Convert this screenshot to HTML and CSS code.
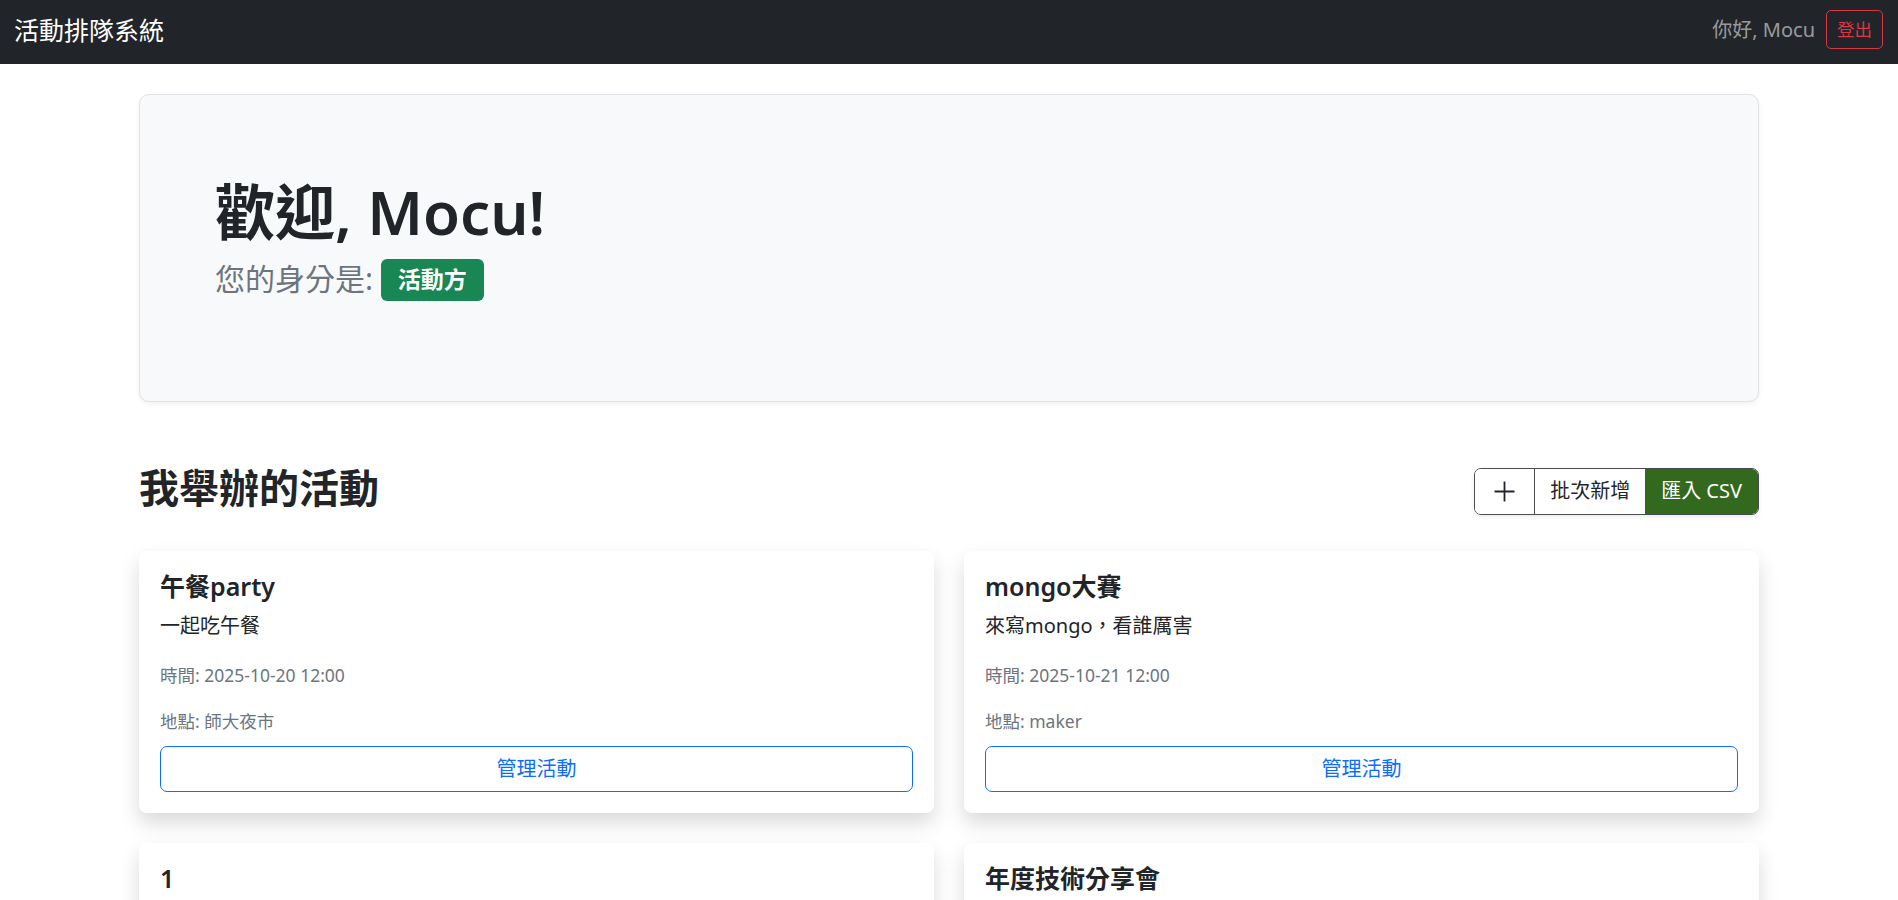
FILE: index.html
```html
<!DOCTYPE html>
<html lang="zh-Hant">
<head>
<meta charset="utf-8">
<title>活動排隊系統</title>
<link rel="stylesheet" href="styles.css">
</head>
<body>
<nav class="navbar">
  <a class="brand" href="#">活動排隊系統</a>
  <div class="nav-right">
    <span class="greet">你好, Mocu</span>
    <button class="btn-logout" type="button">登出</button>
  </div>
</nav>
<main class="container">
  <section class="hero">
    <h1 class="hero-title">歡迎, Mocu!</h1>
    <p class="hero-lead">您的身分是: <span class="badge">活動方</span></p>
  </section>

  <div class="section-head">
    <h2 class="section-title">我舉辦的活動</h2>
    <div class="btn-group">
      <button class="grp-btn grp-add" type="button" aria-label="新增">
        <svg width="23" height="23" viewBox="0 0 23 23" aria-hidden="true"><path d="M11.5 1.5v20M1.5 11.5h20" stroke="#212529" stroke-width="1.8" fill="none"/></svg>
      </button>
      <button class="grp-btn" type="button">批次新增</button>
      <button class="grp-btn grp-csv" type="button">匯入 CSV</button>
    </div>
  </div>

  <div class="card-grid">
    <article class="card">
      <h5 class="card-title">午餐party</h5>
      <p class="card-desc">一起吃午餐</p>
      <p class="card-meta">時間: 2025-10-20 12:00</p>
      <p class="card-meta card-loc">地點: 師大夜市</p>
      <button class="btn-manage" type="button">管理活動</button>
    </article>
    <article class="card">
      <h5 class="card-title">mongo大賽</h5>
      <p class="card-desc">來寫mongo，看誰厲害</p>
      <p class="card-meta">時間: 2025-10-21 12:00</p>
      <p class="card-meta card-loc">地點: maker</p>
      <button class="btn-manage" type="button">管理活動</button>
    </article>
    <article class="card">
      <h5 class="card-title">1</h5>
      <p class="card-desc">1</p>
      <p class="card-meta">時間: 2025-10-22 12:00</p>
      <p class="card-meta card-loc">地點: 1</p>
      <button class="btn-manage" type="button">管理活動</button>
    </article>
    <article class="card">
      <h5 class="card-title">年度技術分享會</h5>
      <p class="card-desc">分享今年的技術心得</p>
      <p class="card-meta">時間: 2025-11-01 14:00</p>
      <p class="card-meta card-loc">地點: 會議室</p>
      <button class="btn-manage" type="button">管理活動</button>
    </article>
  </div>
</main>
</body>
</html>
```

FILE: styles.css
```css
* { box-sizing: border-box; }

html, body {
  margin: 0;
  padding: 0;
  background: #fff;
}

body {
  font-family: "Noto Sans", "Noto Sans CJK TC", sans-serif;
  font-size: 20px;
  line-height: 1.5;
  color: #212529;
}

/* Navbar */
.navbar {
  height: 64px;
  background: #212529;
  display: flex;
  align-items: center;
  justify-content: space-between;
  padding: 0 15px 5px 14px;
}

.brand {
  color: #fff;
  text-decoration: none;
  font-size: 25px;
  line-height: 1.2;
}

.nav-right {
  display: flex;
  align-items: center;
  gap: 11px;
}

.greet {
  color: rgba(255, 255, 255, 0.55);
  font-size: 20px;
  line-height: 1.5;
}

.btn-logout {
  font-family: inherit;
  font-size: 17.5px;
  line-height: 1.5;
  color: #dc3545;
  background: transparent;
  border: 1px solid #dc3545;
  border-radius: 5px;
  padding: 5px 10px;
}

/* Container */
.container {
  width: 1650px;
  margin: 0 auto;
  padding: 0 15px;
}

/* Hero */
.hero {
  margin-top: 30px;
  height: 308px;
  background: #f8f9fa;
  border: 1px solid #dfe2e6;
  border-radius: 10px;
  box-shadow: 0 2px 5px rgba(0, 0, 0, 0.06);
  padding: 81px 75px 0;
}

.hero-title {
  margin: 0 0 8px;
  font-size: 60px;
  line-height: 1.2;
  font-weight: 600;
  color: #212529;
}

.hero-lead {
  margin: 0;
  font-size: 30px;
  line-height: 1.5;
  color: #6c757d;
}

.badge {
  display: inline-block;
  background: #198754;
  color: #fff;
  font-size: 23px;
  font-weight: 700;
  line-height: 1;
  padding: 9px 17px 10px;
  border-radius: 6px;
  vertical-align: 2px;
}

/* Section head */
.section-head {
  margin-top: 62px;
  display: flex;
  justify-content: space-between;
  align-items: center;
}

.section-title {
  margin: 0 0 6px;
  font-size: 40px;
  line-height: 1.2;
  font-weight: 700;
}

.btn-group {
  display: flex;
  height: 47px;
  border: 1px solid #4a4d50;
  border-radius: 7px;
  overflow: hidden;
  box-shadow: 0 2px 5px rgba(0, 0, 0, 0.08);
}

.grp-btn {
  font-family: inherit;
  font-size: 20px;
  line-height: 1.5;
  color: #212529;
  background: #fff;
  border: 0;
  padding: 0 15px;
  display: flex;
  align-items: center;
}

.grp-add {
  padding: 0 18px;
  border-right: 1px solid #4a4d50;
}

.grp-csv {
  background: #33691e;
  color: #fff;
  padding: 0 16px;
}

/* Cards */
.card-grid {
  margin-top: 33px;
  display: grid;
  grid-template-columns: 1fr 1fr;
  gap: 30px;
  padding-bottom: 40px;
}

.card {
  background: #fff;
  border-radius: 8px;
  box-shadow: 0 10px 20px rgba(0, 0, 0, 0.15);
  padding: 20px 21px 21px;
  display: flex;
  flex-direction: column;
}

.card-title {
  margin: 0 0 10px;
  font-size: 25px;
  line-height: 1.2;
  font-weight: 600;
  color: #212529;
}

.card-desc {
  margin: 0 0 21px;
  font-size: 20px;
  line-height: 1.5;
}

.card-meta {
  margin: 0 0 20px;
  font-size: 17.5px;
  line-height: 26px;
  color: #6c757d;
}

.card-loc {
  margin-bottom: 12px;
}

.btn-manage {
  font-family: inherit;
  font-size: 20px;
  line-height: 1.5;
  color: #0d6efd;
  background: #fff;
  border: 1px solid #0d6efd;
  border-radius: 7px;
  padding: 7px 15px;
  width: 100%;
}
```
